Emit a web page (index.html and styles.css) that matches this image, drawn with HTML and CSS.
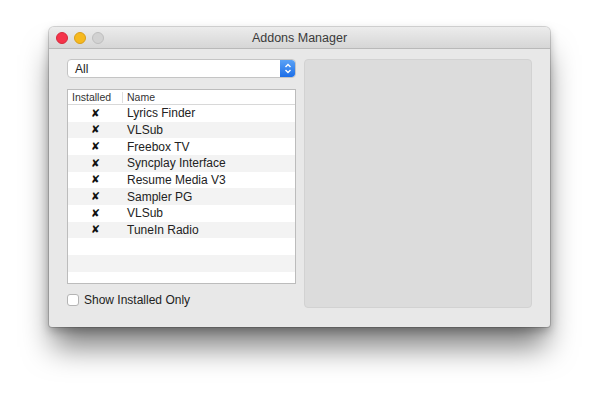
FILE: index.html
```html
<!DOCTYPE html>
<html lang="en">
<head>
    <meta charset="UTF-8">
    <title>Addons Manager</title>
    <link rel="stylesheet" href="styles.css">
</head>
<body>
    <div class="window">
        <div class="titlebar">
            <div class="lights">
                <span class="light red"></span>
                <span class="light yellow"></span>
                <span class="light gray"></span>
            </div>
            <div class="title">Addons Manager</div>
        </div>
        <div class="content">
            <div class="left">
                <div class="popup">
                    <span class="popup-label">All</span>
                    <span class="stepper">
                        <svg width="8" height="11" viewBox="0 0 8 11">
                            <path d="M1.5 4 L4 1.5 L6.5 4 M1.5 7 L4 9.5 L6.5 7" fill="none" stroke="#fff" stroke-width="1.4"/>
                        </svg>
                    </span>
                </div>
                <div class="table">
                    <div class="thead">
                        <div class="col-inst">Installed</div>
                        <div class="col-name">Name</div>
                    </div>
                    <div class="row"><div class="col-inst">✘</div><div class="col-name">Lyrics Finder</div></div>
                    <div class="row"><div class="col-inst">✘</div><div class="col-name">VLSub</div></div>
                    <div class="row"><div class="col-inst">✘</div><div class="col-name">Freebox TV</div></div>
                    <div class="row"><div class="col-inst">✘</div><div class="col-name">Syncplay Interface</div></div>
                    <div class="row"><div class="col-inst">✘</div><div class="col-name">Resume Media V3</div></div>
                    <div class="row"><div class="col-inst">✘</div><div class="col-name">Sampler PG</div></div>
                    <div class="row"><div class="col-inst">✘</div><div class="col-name">VLSub</div></div>
                    <div class="row"><div class="col-inst">✘</div><div class="col-name">TuneIn Radio</div></div>
                    <div class="row"></div>
                    <div class="row"></div>
                    <div class="row"></div>
                </div>
                <label class="check">
                    <span class="box"></span>
                    <span>Show Installed Only</span>
                </label>
            </div>
            <div class="panel"></div>
        </div>
    </div>
</body>
</html>
```

FILE: styles.css
```css
body, html {
    margin: 0;
    padding: 0;
    width: 100%;
    height: 100%;
    background-color: #fff;
    overflow: hidden;
}
body {
    padding: 27px 0 0 49px;
    box-sizing: border-box;
    font-family: "Liberation Sans", Arial, sans-serif;
    font-size: 12px;
    color: #222;
}
.window {
    width: 501px;
    height: 300px;
    background-color: #e8e8e8;
    border-radius: 5px 5px 3px 3px;
    box-shadow: 0 0 0 1px rgba(0,0,0,0.15), 0 4px 10px rgba(0,0,0,0.25), 0 24px 30px -4px rgba(0,0,0,0.5);
    display: flex;
    flex-direction: column;
    overflow: hidden;
}
.titlebar {
    height: 21px;
    background: linear-gradient(#ececec, #d6d6d6);
    border-bottom: 1px solid #b9b9b9;
    position: relative;
    display: flex;
    align-items: center;
    justify-content: center;
}
.lights {
    position: absolute;
    left: 7px;
    top: 5px;
    display: flex;
    gap: 6px;
}
.light {
    width: 12px;
    height: 12px;
    border-radius: 50%;
    box-sizing: border-box;
}
.red { background: #f5334a; border: 1px solid #d52a3c; }
.yellow { background: #f6b91e; border: 1px solid #d99e1a; }
.gray { background: #d2d2d2; border: 1px solid #bebebe; }
.title {
    font-size: 12.5px;
    color: #3a3a3a;
}
.content {
    display: flex;
    padding: 10px 18px 0 18px;
    gap: 8px;
}
.left {
    width: 229px;
    display: flex;
    flex-direction: column;
}
.popup {
    height: 19px;
    box-sizing: border-box;
    background: #fff;
    border: 1px solid #c4c4c4;
    border-radius: 4px;
    display: flex;
    align-items: center;
    justify-content: space-between;
    overflow: hidden;
    font-size: 12px;
}
.popup-label {
    padding-left: 7px;
}
.stepper {
    width: 15px;
    height: 100%;
    background: linear-gradient(#5aa2f6, #1c6ee8);
    display: flex;
    align-items: center;
    justify-content: center;
    border-radius: 0 3px 3px 0;
}
.table {
    margin-top: 11px;
    height: 195px;
    box-sizing: border-box;
    background: #fff;
    border: 1px solid #bcbcbc;
    overflow: hidden;
}
.thead {
    height: 14px;
    border-bottom: 1px solid #d8d8d8;
    display: flex;
    align-items: center;
    font-size: 10.5px;
    color: #333;
}
.thead .col-name {
    border-left: 1px solid #dedede;
    padding-left: 4px;
    height: 11px;
    line-height: 11px;
}
.row {
    height: 16.67px;
    display: flex;
    align-items: center;
}
.row:nth-child(odd) {
    background: #f3f3f3;
}
.col-inst {
    width: 55px;
    flex: none;
    text-align: center;
}
.thead .col-inst {
    width: 50px;
    padding-left: 4px;
    text-align: left;
}
.row .col-inst {
    font-family: "DejaVu Sans", sans-serif;
    font-size: 11px;
    font-weight: bold;
    color: #111;
}
.col-name {
    padding-left: 4px;
}
.check {
    margin-top: 9px;
    display: flex;
    align-items: center;
    gap: 5px;
    font-size: 12px;
}
.box {
    width: 12px;
    height: 12px;
    box-sizing: border-box;
    background: #fff;
    border: 1px solid #b4b4b4;
    border-radius: 3px;
}
.panel {
    width: 228px;
    height: 249px;
    box-sizing: border-box;
    background: #dcdcdc;
    border: 1px solid #d2d2d2;
    border-radius: 4px;
}
```
